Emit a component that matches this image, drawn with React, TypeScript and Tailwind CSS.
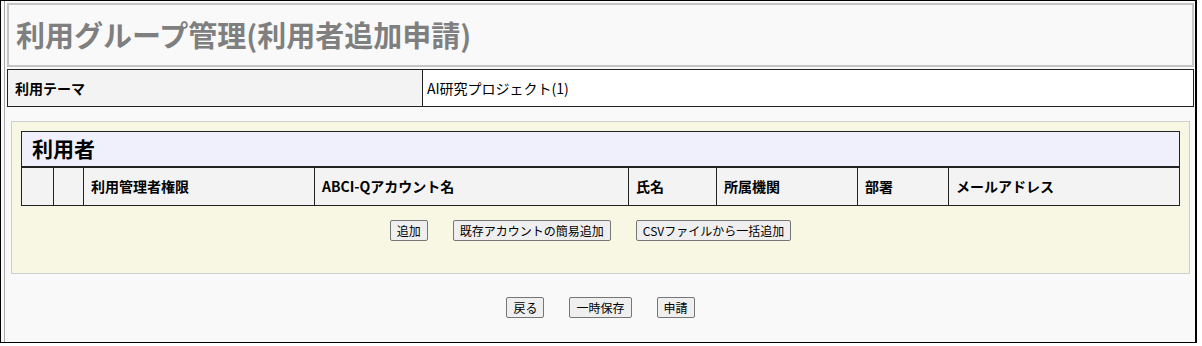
import React from 'react';

const font = { fontFamily: '"Noto Sans CJK JP", "Noto Sans", sans-serif' };

const columns = ['', '', '利用管理者権限', 'ABCI-Qアカウント名', '氏名', '所属機関', '部署', 'メールアドレス'];

const Btn: React.FC<{ label: string }> = ({ label }) => (
  <button className="h-[21px] px-[6px] text-[12px] leading-none text-black bg-[#efefef] border border-[#767676] rounded-[2px]">
    {label}
  </button>
);

const App: React.FC = () => {
  return (
    <div className="w-[1202px] h-[346px] bg-white" style={font}>
      <div className="w-[1197px] h-[343px] border border-black border-r-2 bg-[#f9f9f9] pl-[3px] flex">
        <div className="flex-1 border-l border-[#a8a8a8] pl-[2px] pr-[1px] pt-[2px] flex flex-col">
          {/* Title */}
          <div className="h-[64px] border-2 border-[#c4c4c4] bg-[#f9f9f9] flex items-center pl-[7px]">
            <h1 className="text-[29px] font-bold text-[#7f7f7f]">
              利用グループ管理(利用者追加申請)
            </h1>
          </div>

          {/* Theme */}
          <div className="mt-[2px] h-[38px] border border-[#222] flex">
            <div className="w-[415px] bg-[#f3f3f3] border-r border-[#222] flex items-center pl-[7px] text-[14px] font-bold text-black">
              利用テーマ
            </div>
            <div className="flex-1 bg-white flex items-center pl-[4px] text-[14px] text-black">
              AI研究プロジェクト(1)
            </div>
          </div>

          {/* Users section */}
          <div className="mt-[14px] mx-[4px] h-[153px] border border-[#cfcfcf] bg-[#f8f7e4] px-[9px] pt-[9px]">
            <div className="border border-[#222]">
              <div className="h-[36px] bg-[#f0f0fd] border-b-2 border-[#222] flex items-center pl-[10px] text-[21px] font-bold text-black">
                利用者
              </div>
              <div className="grid grid-cols-[31px_30px_231px_314px_88px_141px_91px_1fr] h-[37px] bg-[#f3f3f3]">
                {columns.map((c, i) => (
                  <div
                    key={i}
                    className={`flex items-center pl-[7px] text-[14px] font-bold text-black ${i > 0 ? 'border-l border-[#222]' : ''}`}
                  >
                    {c}
                  </div>
                ))}
              </div>
            </div>
            <div className="mt-[14px] flex justify-center gap-[25px] pr-[20px]">
              <Btn label="追加" />
              <Btn label="既存アカウントの簡易追加" />
              <Btn label="CSVファイルから一括追加" />
            </div>
          </div>

          {/* Footer buttons */}
          <div className="mt-[23px] flex justify-center gap-[25px]">
            <Btn label="戻る" />
            <Btn label="一時保存" />
            <Btn label="申請" />
          </div>
        </div>
      </div>
    </div>
  );
};

export default App;
